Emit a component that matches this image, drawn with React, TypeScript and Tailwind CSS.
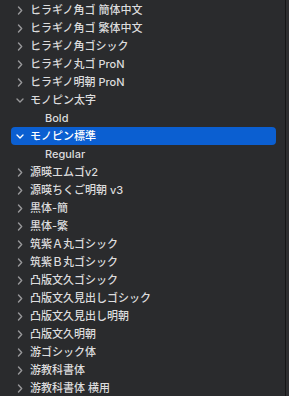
import React from "react";

type Row = { label: string; depth: 0 | 1; state?: "open" | "closed"; selected?: boolean };

const rows: Row[] = [
  { label: "ヒラギノ角ゴ 簡体中文", depth: 0, state: "closed" },
  { label: "ヒラギノ角ゴ 繁体中文", depth: 0, state: "closed" },
  { label: "ヒラギノ角ゴシック", depth: 0, state: "closed" },
  { label: "ヒラギノ丸ゴ ProN", depth: 0, state: "closed" },
  { label: "ヒラギノ明朝 ProN", depth: 0, state: "closed" },
  { label: "モノピン太字", depth: 0, state: "open" },
  { label: "Bold", depth: 1 },
  { label: "モノピン標準", depth: 0, state: "open", selected: true },
  { label: "Regular", depth: 1 },
  { label: "源暎エムゴv2", depth: 0, state: "closed" },
  { label: "源暎ちくご明朝 v3", depth: 0, state: "closed" },
  { label: "黒体-簡", depth: 0, state: "closed" },
  { label: "黒体-繁", depth: 0, state: "closed" },
  { label: "筑紫Ａ丸ゴシック", depth: 0, state: "closed" },
  { label: "筑紫Ｂ丸ゴシック", depth: 0, state: "closed" },
  { label: "凸版文久ゴシック", depth: 0, state: "closed" },
  { label: "凸版文久見出しゴシック", depth: 0, state: "closed" },
  { label: "凸版文久見出し明朝", depth: 0, state: "closed" },
  { label: "凸版文久明朝", depth: 0, state: "closed" },
  { label: "游ゴシック体", depth: 0, state: "closed" },
  { label: "游教科書体", depth: 0, state: "closed" },
  { label: "游教科書体 横用", depth: 0, state: "closed" },
];

function Chevron({ open }: { open: boolean }) {
  return (
    <svg width="8" height="9" viewBox="0 0 8 9" fill="none" className="shrink-0" aria-hidden="true">
      {open ? (
        <path d="M1 3l3 3 3-3" stroke="currentColor" strokeWidth="1.4" strokeLinecap="round" strokeLinejoin="round" />
      ) : (
        <path d="M2.5 1l3.2 3.5L2.5 8" stroke="currentColor" strokeWidth="1.4" strokeLinecap="round" strokeLinejoin="round" />
      )}
    </svg>
  );
}

export default function App() {
  return (
    <div className="flex h-[396px] w-[289px] overflow-hidden bg-[#2e2e30]">
      <div
        className="h-full w-[286px] overflow-hidden border-r border-[#161617] bg-[#2a2b2d] pt-[1px]"
        style={{ fontFamily: 'Inter, "Noto Sans CJK JP", sans-serif' }}
      >
        {rows.map((row) => (
          <div
            key={row.label}
            className={`ml-[11px] flex h-[18px] w-[265px] items-center rounded-[4px] text-[11px] font-medium leading-none ${
              row.selected ? "bg-[#0b5fd1] text-white" : "text-[#dcdcdd]"
            } ${row.depth === 1 ? "pl-[34px]" : "pl-[5px]"}`}
          >
            {row.state && (
              <span className={row.selected ? "text-white" : "text-[#98989a]"}>
                <Chevron open={row.state === "open"} />
              </span>
            )}
            <span className={`whitespace-nowrap ${row.state ? "ml-[6px]" : ""}`}>{row.label}</span>
          </div>
        ))}
      </div>
    </div>
  );
}
